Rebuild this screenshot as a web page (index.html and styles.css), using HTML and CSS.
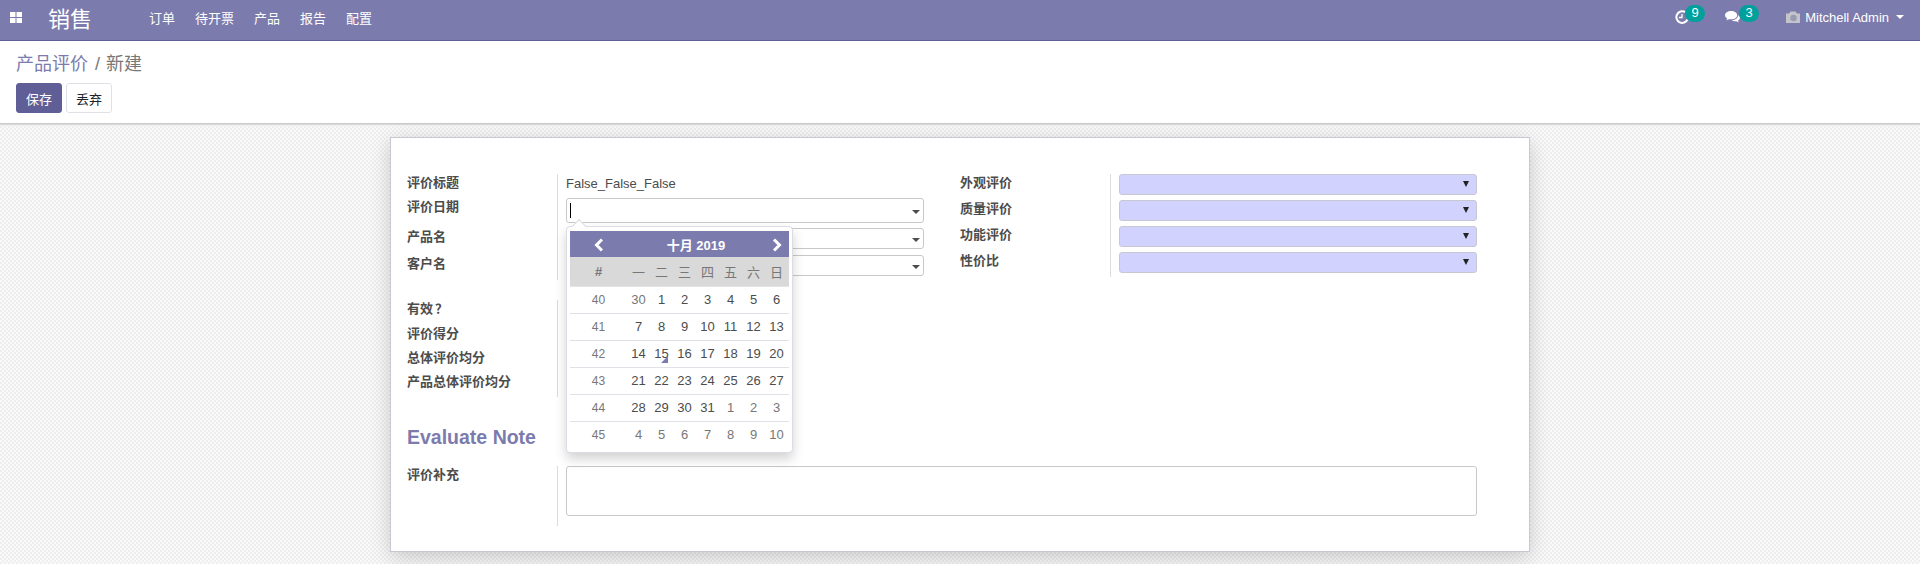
FILE: index.html
```html
<!DOCTYPE html>
<html lang="zh-CN">
<head>
    <meta charset="UTF-8">
    <title>产品评价 / 新建</title>
    <link rel="stylesheet" href="styles.css">
</head>
<body>
    <nav class="navbar">
        <svg class="apps-icon" width="12" height="11" viewBox="0 0 12 11"><path fill="#fff" d="M0 0h5.500v5H0zM6.500 0H12v5H6.500zM0 6h5.500v5H0zM6.500 6H12v5H6.500z"/></svg>
        <span class="brand">销售</span>
        <ul class="menu">
            <li>订单</li>
            <li>待开票</li>
            <li>产品</li>
            <li>报告</li>
            <li>配置</li>
        </ul>
        <div class="systray">
            <span class="tray-item">
                <svg width="14" height="14" viewBox="0 0 14 14"><path fill="none" stroke="#fff" stroke-width="2" d="M12.500 9.500A5.800 5.800 0 1 1 10 2"/><path fill="none" stroke="#fff" stroke-width="1.300" d="M7 4v3.500H4"/></svg>
                <b class="badge">9</b>
            </span>
            <span class="tray-item tray-chat">
                <svg width="16" height="14" viewBox="0 0 17 15"><path fill="#fff" d="M6.500 1C3 1 0 3 0 5.500 0 7 1 8.200 2.300 9L1.500 11l2.700-1.200c.7.200 1.500.2 2.300.2 3.500 0 6.500-2 6.500-4.500S10 1 6.500 1z"/><path fill="#fff" d="M14 5.500c0 2.800-3 5.200-7 5.400.9.800 2.300 1.200 3.700 1.200l1.300-.1 2.500 1.500-.6-2.200c1.300-.7 2.100-1.800 2.100-3 0-1.200-.8-2.200-2-2.800z"/></svg>
                <b class="badge">3</b>
            </span>
            <span class="user">
                <svg width="14" height="12" viewBox="0 0 14 12"><path fill="#c4c4cc" d="M0 2.500h3L4.500.5h5L11 2.500h3V12H0z"/><circle cx="7.500" cy="7" r="3.200" fill="#9b9bb0"/></svg>
                <span>Mitchell Admin</span>
                <i class="caret"></i>
            </span>
        </div>
    </nav>

    <header class="control-panel">
        <div class="breadcrumb"><span class="crumb-link">产品评价</span> / 新建</div>
        <div class="buttons">
            <button class="btn btn-primary">保存</button>
            <button class="btn btn-plain">丢弃</button>
        </div>
    </header>

    <main class="form-bg">
        <div class="sheet">
            <div class="top-groups">
                <div class="group group-left">
                    <div class="section section-info">
                        <div class="row row-title"><label>评价标题</label><div class="field">False_False_False</div></div>
                        <div class="row row-date"><label>评价日期</label><div class="field"><div class="input input-date"><i class="cursor"></i><i class="arrow"></i></div></div></div>
                        <div class="row row-product"><label>产品名</label><div class="field"><div class="input input-m2o"><i class="arrow"></i></div></div></div>
                        <div class="row row-customer"><label>客户名</label><div class="field"><div class="input input-m2o"><i class="arrow"></i></div></div></div>
                    </div>
                    <div class="section section-scores">
                        <div class="row row-score"><label>有效<span class="question">？</span></label><div class="field"></div></div>
                        <div class="row row-score"><label>评价得分</label><div class="field"></div></div>
                        <div class="row row-score"><label>总体评价均分</label><div class="field"></div></div>
                        <div class="row row-score"><label>产品总体评价均分</label><div class="field"></div></div>
                    </div>
                </div>
                <div class="group group-right">
                    <div class="row row-select"><label>外观评价</label><div class="field"><div class="select"></div></div></div>
                    <div class="row row-select"><label>质量评价</label><div class="field"><div class="select"></div></div></div>
                    <div class="row row-select"><label>功能评价</label><div class="field"><div class="select"></div></div></div>
                    <div class="row row-select"><label>性价比</label><div class="field"><div class="select"></div></div></div>
                </div>
            </div>
            <h2 class="note-title">Evaluate Note</h2>
            <div class="row row-note"><label>评价补充</label><div class="field"><div class="textarea"></div></div></div>

            <div class="datepicker">
                <i class="picker-tip"></i>
                <table class="calendar">
                    <colgroup>
                        <col class="col-week">
                        <col class="col-day"><col class="col-day"><col class="col-day"><col class="col-day"><col class="col-day"><col class="col-day">
                        <col class="col-last">
                    </colgroup>
                    <thead>
                        <tr class="cal-head">
                            <th><svg width="10" height="14" viewBox="0 0 10 14"><path fill="none" stroke="#fff" stroke-width="3" d="M8 1.500L2.500 7 8 12.500"/></svg></th>
                            <th colspan="6" class="cal-month">十月 2019</th>
                            <th><svg width="10" height="14" viewBox="0 0 10 14"><path fill="none" stroke="#fff" stroke-width="3" d="M2 1.500L7.500 7 2 12.500"/></svg></th>
                        </tr>
                        <tr class="cal-dow">
                            <th class="week">#</th><th>一</th><th>二</th><th>三</th><th>四</th><th>五</th><th>六</th><th>日</th>
                        </tr>
                    </thead>
                    <tbody>
                        <tr><td class="week">40</td><td class="old">30</td><td>1</td><td>2</td><td>3</td><td>4</td><td>5</td><td>6</td></tr>
                        <tr><td class="week">41</td><td>7</td><td>8</td><td>9</td><td>10</td><td>11</td><td>12</td><td>13</td></tr>
                        <tr><td class="week">42</td><td>14</td><td class="today">15</td><td>16</td><td>17</td><td>18</td><td>19</td><td>20</td></tr>
                        <tr><td class="week">43</td><td>21</td><td>22</td><td>23</td><td>24</td><td>25</td><td>26</td><td>27</td></tr>
                        <tr><td class="week">44</td><td>28</td><td>29</td><td>30</td><td>31</td><td class="old">1</td><td class="old">2</td><td class="old">3</td></tr>
                        <tr><td class="week">45</td><td class="old">4</td><td class="old">5</td><td class="old">6</td><td class="old">7</td><td class="old">8</td><td class="old">9</td><td class="old">10</td></tr>
                    </tbody>
                </table>
            </div>
        </div>
    </main>
</body>
</html>
```

FILE: styles.css
```css
* {
    box-sizing: border-box;
}
body {
    margin: 0;
    height: 564px;
    overflow: hidden;
    font-family: "Liberation Sans", "Noto Sans CJK SC", sans-serif;
    font-size: 13px;
    color: #4c4c4c;
    display: flex;
    flex-direction: column;
}

/* navbar */
.navbar {
    height: 41px;
    flex: none;
    background-color: #7c7bad;
    border-bottom: 1px solid #5f5e97;
    color: #fff;
    display: flex;
    align-items: center;
    padding: 0 0 6px 10px;
}
.apps-icon {
    flex: none;
}
.brand {
    font-size: 22px;
    margin-left: 26px;
    width: 101px;
}
.menu {
    list-style: none;
    display: flex;
    gap: 20px;
    margin: 0;
    padding: 0;
}
.systray {
    margin-left: auto;
    display: flex;
    align-items: center;
    padding-right: 16px;
}
.tray-item {
    position: relative;
    display: flex;
    width: 50px;
}
.tray-item svg {
    margin-left: 1px;
}
.badge {
    position: absolute;
    left: 11px;
    top: -5px;
    width: 20px;
    height: 17px;
    border-radius: 9px;
    background-color: #00a09d;
    font-weight: normal;
    font-size: 13px;
    line-height: 16px;
    text-align: center;
}
.tray-chat .badge {
    left: 15px;
}
.user {
    display: flex;
    align-items: center;
    gap: 5px;
    margin-left: 12px;
}
.caret {
    border-top: 4px solid #fff;
    border-left: 4px solid transparent;
    border-right: 4px solid transparent;
    margin-left: 2px;
}

/* control panel */
.control-panel {
    position: relative;
    height: 83px;
    flex: none;
    background-color: #fff;
    border-bottom: 1px solid #ccc;
    box-shadow: 0 1px 1px #d8d8dc;
    padding: 11px 16px 0;
}
.breadcrumb {
    font-size: 18px;
    line-height: 24px;
    color: #777;
    word-spacing: 1px;
}
.crumb-link {
    color: #7c7bad;
    margin-right: 1px;
}
.buttons {
    display: flex;
    gap: 4px;
    margin-top: 7px;
}
.btn {
    height: 30px;
    width: 46px;
    padding: 0;
    border-radius: 3px;
    font: inherit;
    font-size: 13px;
}
.btn-primary {
    background-color: #5f5e97;
    border: 1px solid #5f5e97;
    color: #fff;
}
.btn-plain {
    background-color: #fff;
    border: 1px solid #dee2e6;
    color: #212529;
}

/* form */
.form-bg {
    flex: 1;
    min-height: 0;
    background-color: #f4f4f4;
    background-image: conic-gradient(#eee 25%, #f9f9f9 0 50%, #eee 0 75%, #f9f9f9 0);
    background-size: 4px 4px;
    padding-top: 13px;
}
.sheet {
    position: relative;
    width: 1140px;
    height: 415px;
    margin: 0 auto;
    background-color: #fff;
    border: 1px solid #c8c8d3;
    box-shadow: 0 5px 20px -1px rgba(0, 0, 0, 0.2);
    padding: 36px 16px 0;
}
.top-groups {
    display: flex;
}
.group-left {
    width: 553px;
}
.group-right {
    width: 517px;
}
.row {
    display: flex;
}
.row label {
    flex: none;
    width: 150px;
    font-weight: bold;
    line-height: 18px;
}
.field {
    flex: 1;
    border-left: 1px solid #dcdcdc;
    padding-left: 8px;
}
.group-left .field {
    flex: none;
    width: 367px;
}
.question {
    font-family: "Noto Sans CJK TC", sans-serif;
    padding-left: 2px;
}
.section-scores {
    margin-top: 20px;
}
.row-title {
    height: 24px;
}
.row-title .field {
    line-height: 19px;
}
.row-date {
    height: 30px;
}
.row-product {
    height: 27px;
}
.row-customer {
    height: 25px;
}
.row-score {
    height: 24px;
}
.row-score:first-child {
    height: 25px;
}
.row-score:first-child label {
    margin-top: -1px;
}
.input {
    position: relative;
    border: 1px solid #c8c8c8;
    border-radius: 3px;
    background-color: #fff;
}
.input-date {
    height: 25px;
}
.input-m2o {
    height: 21px;
}
.arrow {
    position: absolute;
    right: 3px;
    top: 50%;
    margin-top: -1px;
    border-top: 4px solid #4c4c4c;
    border-left: 4px solid transparent;
    border-right: 4px solid transparent;
}
.cursor {
    position: absolute;
    left: 3px;
    top: 4px;
    width: 1px;
    height: 15px;
    background-color: #000;
}
.group-right .row {
    height: 26px;
}
.group-right .row:last-child {
    height: 25px;
}
.select {
    position: relative;
    width: 358px;
    height: 21px;
    background-color: #d2d2ff;
    border: 1px solid #c8c8d3;
    border-radius: 3px;
}
.select::after {
    content: "";
    position: absolute;
    right: 7px;
    top: 6px;
    border-top: 6px solid #222;
    border-left: 3px solid transparent;
    border-right: 3px solid transparent;
}
.note-title {
    margin: 0;
    padding-top: 28px;
    height: 69px;
    font-size: 19.500px;
    line-height: 24px;
    color: #7c7bad;
}
.row-note {
    height: 60px;
}
.row-note .field {
    flex: none;
    width: 920px;
}
.textarea {
    height: 50px;
    width: 911px;
    border: 1px solid #c8c8c8;
    border-radius: 3px;
}

/* datepicker */
.datepicker {
    position: absolute;
    left: 175px;
    top: 88px;
    width: 227px;
    height: 227px;
    padding: 4px 3px 0;
    background-color: #fff;
    border: 1px solid #dcdce4;
    border-radius: 4px;
    box-shadow: 0 6px 12px rgba(0, 0, 0, 0.18);
}
.picker-tip {
    position: absolute;
    left: 7px;
    top: -6px;
    width: 10px;
    height: 10px;
    background-color: #fff;
    border-top: 1px solid #dcdce4;
    border-left: 1px solid #dcdce4;
    transform: rotate(45deg);
}
.calendar {
    position: relative;
    width: 219px;
    border-collapse: collapse;
    table-layout: fixed;
    text-align: center;
}
.col-week {
    width: 57px;
}
.col-day {
    width: 23px;
}
.col-last {
    width: 24px;
}
.calendar th {
    padding: 0;
    font-weight: normal;
}
.calendar tr > :last-child {
    padding-right: 1px;
}
.cal-head {
    height: 26px;
    background-color: #7c7bad;
    color: #fff;
}
.calendar .cal-month {
    font-weight: bold;
}
.cal-head svg {
    vertical-align: middle;
}
.cal-dow {
    height: 29px;
    background-color: #d9d9d9;
    border-bottom: 1px solid #e4e4e8;
    color: #777;
}
.calendar td {
    height: 27px;
    padding: 0;
    border-bottom: 1px solid #e0e0e6;
    color: #4c4c4c;
}
.calendar tr:last-child td {
    border-bottom: none;
}
.calendar .week {
    color: #777;
    font-size: 12px;
}
.calendar .cal-dow .week {
    font-size: 13px;
    font-weight: bold;
}
.calendar .old {
    color: #777;
}
.today {
    position: relative;
}
.today::after {
    content: "";
    position: absolute;
    right: 5px;
    bottom: 4px;
    border-bottom: 7px solid #7c7bad;
    border-left: 7px solid transparent;
}
```
